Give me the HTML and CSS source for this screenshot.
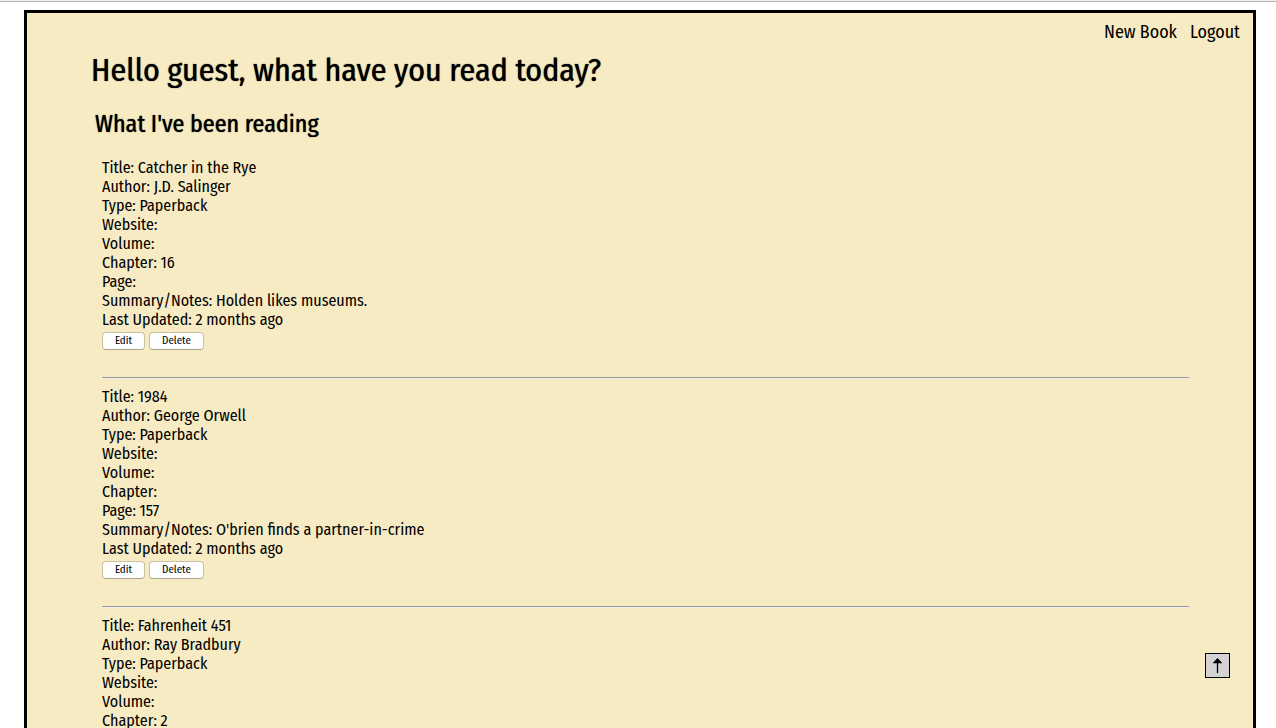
FILE: index.html
```html
<!DOCTYPE html>
<html lang="en">
<head>
<meta charset="utf-8">
<title>Reading log</title>
<link rel="stylesheet" href="styles.css">
</head>
<body>
<main class="page">
  <nav class="nav"><a href="#new">New Book</a><a href="#logout">Logout</a></nav>
  <h1 class="greeting">Hello guest, what have you read today?</h1>
  <h2 class="subtitle">What I've been reading</h2>
  <div class="books">
    <article class="book">
      <p>Title: Catcher in the Rye</p>
      <p>Author: J.D. Salinger</p>
      <p>Type: Paperback</p>
      <p>Website:</p>
      <p>Volume:</p>
      <p>Chapter: 16</p>
      <p>Page:</p>
      <p>Summary/Notes: Holden likes museums.</p>
      <p>Last Updated: 2 months ago</p>
      <div class="actions"><button class="edit" type="button">Edit</button><button class="delete" type="button">Delete</button></div>
    </article>
    <hr class="divider">
    <article class="book">
      <p>Title: 1984</p>
      <p>Author: George Orwell</p>
      <p>Type: Paperback</p>
      <p>Website:</p>
      <p>Volume:</p>
      <p>Chapter:</p>
      <p>Page: 157</p>
      <p>Summary/Notes: O'brien finds a partner-in-crime</p>
      <p>Last Updated: 2 months ago</p>
      <div class="actions"><button class="edit" type="button">Edit</button><button class="delete" type="button">Delete</button></div>
    </article>
    <hr class="divider">
    <article class="book">
      <p>Title: Fahrenheit 451</p>
      <p>Author: Ray Bradbury</p>
      <p>Type: Paperback</p>
      <p>Website:</p>
      <p>Volume:</p>
      <p>Chapter: 2</p>
    </article>
  </div>
</main>
<a class="to-top" href="#" aria-label="Back to top"><svg width="9" height="16" viewBox="0 0 9 16"><path d="M4.5 15V2M1 4.7L4.5 1L8 4.7Z" fill="#000" stroke="#000" stroke-width="1.3"/></svg></a>
</body>
</html>
```
FILE: styles.css
```css
* {
  box-sizing: border-box;
}

body {
  height: 100vh;
  margin: 0;
  padding: 10px 20px 0 24px;
  overflow: hidden;
  background: #fff linear-gradient(#f0f0f0 1px, #b4b4b4 1px, #b4b4b4 2px, #fff 2px) no-repeat;
  color: #000;
  font-family: "Fira Sans Condensed", Lato, "Open Sans", sans-serif;
  font-size: 16px;
  line-height: 19px;
}

.page {
  min-height: 100%;
  border: 3px solid #000;
  border-bottom: 0;
  background: #f7ebc3;
}

.nav {
  display: flex;
  justify-content: flex-end;
  gap: 13px;
  padding: 8px 13px 0 0;
  font-size: 18px;
  line-height: 22px;
}

.nav a {
  color: inherit;
  text-decoration: none;
}

.greeting,
.subtitle {
  font-weight: 400;
  text-shadow: 0 0 1px #000;
}

.greeting {
  margin: 7px 64px 0;
  font-size: 32px;
  line-height: 40px;
}

.subtitle {
  margin: 19px 68px 0;
  font-size: 24px;
  line-height: 30px;
}

.books {
  margin: 19px 64px 0 75px;
}

.book p {
  margin: 0;
}

.actions {
  display: flex;
  gap: 4px;
  padding: 3px 0 27px;
}

.actions button {
  height: 18px;
  padding: 0;
  border: 1px solid #c9c0a5;
  border-bottom-color: #aaa38c;
  border-radius: 4px;
  background: #fff;
  color: #000;
  font-family: inherit;
  font-size: 11px;
  line-height: 14px;
}

.edit {
  width: 43px;
}

.delete {
  width: 55px;
}

.divider {
  margin: 0 0 8px;
  border: 0;
  border-top: 1px solid #999;
  border-bottom: 1px solid #eee;
}

.to-top {
  position: fixed;
  right: 46px;
  bottom: 50px;
  display: flex;
  align-items: center;
  justify-content: center;
  width: 25px;
  height: 25px;
  border: 1px solid #000;
  background: #d3d3d3;
}
```
